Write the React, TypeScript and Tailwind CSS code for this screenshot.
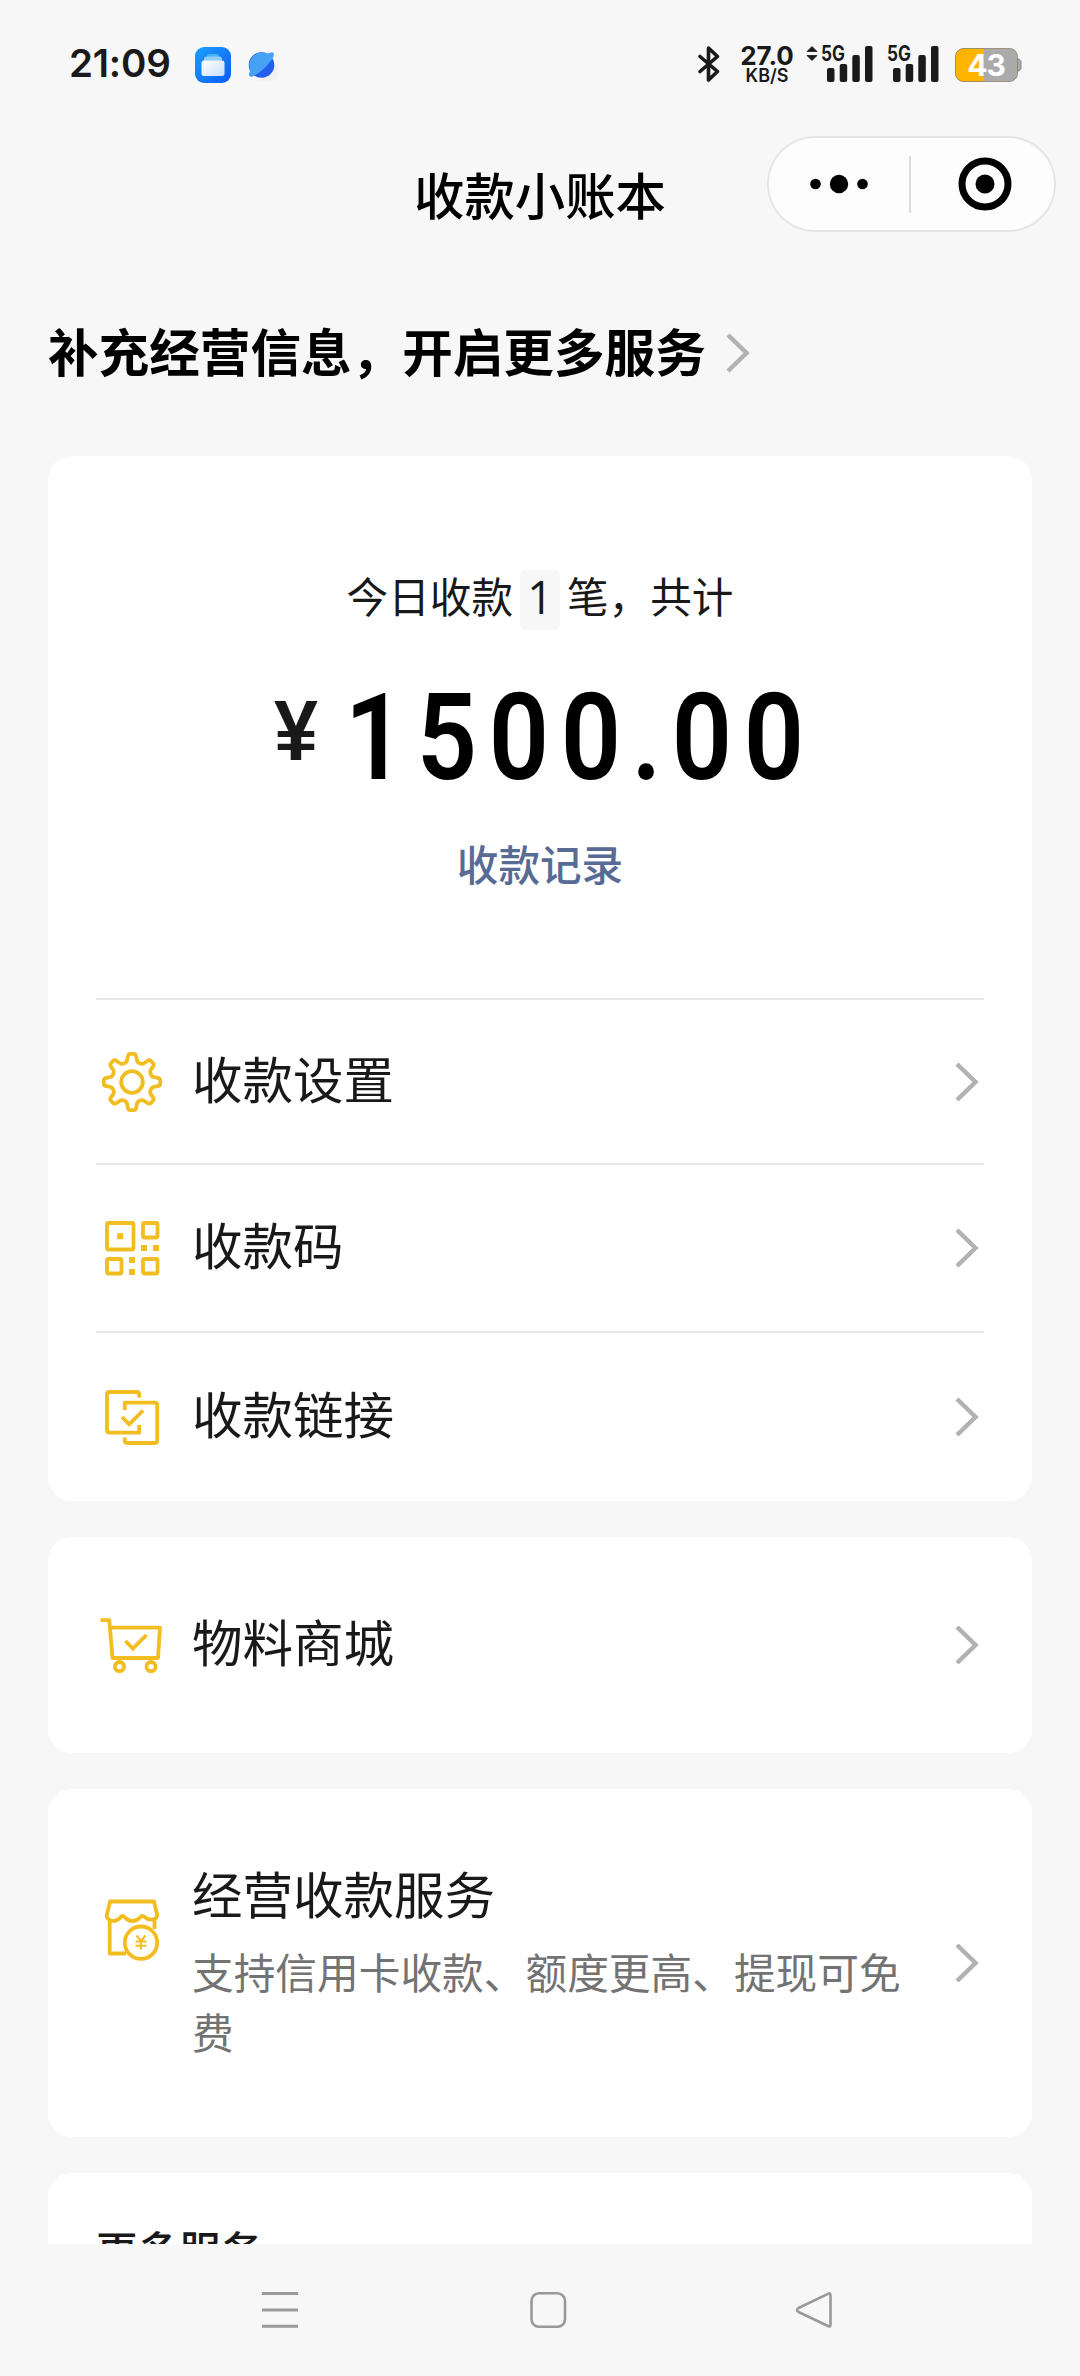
import React from "react";

interface MenuRowProps {
  icon: React.ReactNode;
  title: string;
}

const YELLOW = "#F2BD20";

const digits = ["1", "5", "0", "0", ".", "0", "0"];

const BluetoothIcon = () => (
  <svg width="24" height="38" viewBox="0 0 24 38" fill="none" stroke="#1a1a1a" strokeWidth="3.6" strokeLinejoin="round" strokeLinecap="round">
    <path d="M3 11.5L20.5 26.5L11.5 35V3L20.5 11.5L3 26.5" />
  </svg>
);

const FolderAppIcon = () => (
  <svg width="36" height="36" viewBox="0 0 36 36">
    <defs>
      <linearGradient id="folderBg" x1="0" y1="0" x2="1" y2="1">
        <stop offset="0" stopColor="#1ca0fb" />
        <stop offset="1" stopColor="#0a5cf5" />
      </linearGradient>
      <linearGradient id="folderFront" x1="0" y1="0" x2="1" y2="1">
        <stop offset="0" stopColor="#ffffff" />
        <stop offset="1" stopColor="#c9def9" />
      </linearGradient>
    </defs>
    <rect width="36" height="36" rx="9" fill="url(#folderBg)" />
    <rect x="12" y="7" width="12" height="4" rx="2" fill="#49b2f9" />
    <rect x="9" y="9.5" width="18" height="6" rx="2.5" fill="#8ecdfb" />
    <rect x="6.5" y="13.5" width="23" height="15.5" rx="2.5" fill="url(#folderFront)" />
  </svg>
);

const PlanetIcon = () => (
  <svg width="32" height="32" viewBox="0 0 32 32">
    <path d="M11 31H25Q31 31 31 24V14Z" fill="#f1f1f1" />
    <circle cx="15.5" cy="15" r="12.8" fill="#2160ea" />
    <path d="M27 2.5Q29 4.500 26.500 8.500Q18 21 6.500 26.500Q2.500 27.500 3 24Q3.300 22 4.500 20.500A12.800 12.800 0 0 1 21.500 3.700Q25.500 1.500 27 2.500Z" fill="#47a1f5" />
  </svg>
);

const SignalBars = () => (
  <svg width="46" height="36" viewBox="0 0 46 36" fill="#1a1a1a">
    <rect x="0" y="22" width="7.500" height="14" rx="2" />
    <rect x="12.700" y="18" width="7.500" height="18" rx="2" />
    <rect x="25.300" y="9" width="7.500" height="27" rx="2" />
    <rect x="38" y="0" width="7.500" height="36" rx="2" />
  </svg>
);

const Signal = ({ arrows = false }: { arrows?: boolean }) => (
  <div className="relative h-9 w-[52px]">
    {arrows && (
      <svg className="absolute -left-[15px] top-0" width="12" height="16" viewBox="0 0 12 16" fill="#1a1a1a">
        <path d="M6 0.500L11 5.500H1Z M6 14.500L11 9.500H1Z" stroke="#1a1a1a" strokeWidth="0.800" strokeLinejoin="round" />
      </svg>
    )}
    <span className="absolute -top-px left-0 origin-left scale-x-[.82] font-['Inter'] text-[21px] font-bold leading-[17px]">
      5G
    </span>
    <div className="absolute left-[6px] top-0">
      <SignalBars />
    </div>
  </div>
);

const Battery = () => (
  <div className="relative h-[34px] w-[67px]">
    <svg width="67" height="34" viewBox="0 0 67 34">
      <defs>
        <clipPath id="batteryBody">
          <rect x="0.500" y="0.500" width="62" height="33" rx="8" />
        </clipPath>
      </defs>
      <path d="M62 11H64Q66 12 66 14V20Q66 22 64 23H62Z" fill="#ababab" stroke="#8b8b8b" strokeWidth="1" />
      <g clipPath="url(#batteryBody)">
        <rect width="64" height="34" fill="#ababab" />
        <rect width="29" height="34" fill="#ffb400" />
      </g>
      <rect x="0.500" y="0.500" width="62" height="33" rx="8" fill="none" stroke="#84765a" strokeOpacity="0.700" />
    </svg>
    <span className="absolute inset-y-0 left-0 w-[62px] text-center font-['Inter'] text-[30px] font-bold leading-[35px] tracking-[-1px] text-white">
      43
    </span>
  </div>
);

const StatusBar = () => (
  <header className="flex h-[130px] items-start justify-between pl-[69px] pr-[58px] pt-[46px] text-[#1a1a1a]">
    <div className="flex">
      <span className="w-[126px] whitespace-nowrap font-['Inter'] text-[38.500px] font-semibold leading-[35px] tracking-[-0.200px]">21:09</span>
      <div className="pt-px">
        <FolderAppIcon />
      </div>
      <div className="ml-[15px] pt-1">
        <PlanetIcon />
      </div>
    </div>
    <div className="flex">
      <div className="-mt-px">
        <BluetoothIcon />
      </div>
      <div className="ml-[15px] flex w-[62px] flex-col items-center font-['Inter'] font-bold">
        <span className="text-[26px] leading-[19px]">27.0</span>
        <span className="mt-[3px] text-[18px] font-semibold leading-[16px]">KB/S</span>
      </div>
      <div className="ml-[23px] flex gap-[14px]">
        <Signal arrows />
        <Signal />
      </div>
      <div className="ml-[16px] pt-[2px]">
        <Battery />
      </div>
    </div>
  </header>
);

const NavBar = () => (
  <div className="flex h-[172px] items-start">
    <h1 className="ml-[414px] w-[252px] whitespace-nowrap pt-[28px] text-[50.400px] font-medium leading-[72px] text-black">
      收款小账本
    </h1>
    <div className="flex flex-1 justify-end pr-6 pt-[6px]">
      <div className="flex h-24 w-[289px] items-center rounded-full border-2 border-[#e6e6e6] bg-[#fdfdfd]">
        <div className="flex flex-1 justify-center">
          <svg width="58" height="20" viewBox="0 0 58 20" fill="#000">
            <circle cx="5.500" cy="10" r="5.300" />
            <circle cx="29" cy="10" r="9.200" />
            <circle cx="52.500" cy="10" r="5.300" />
          </svg>
        </div>
        <div className="h-[57px] w-0.5 bg-[#dcdcdc]" />
        <div className="flex w-[143px] justify-center pl-1">
          <svg width="54" height="54" viewBox="0 0 54 54">
            <circle cx="27" cy="27" r="23" fill="none" stroke="#000" strokeWidth="7" />
            <circle cx="27" cy="27" r="9.500" fill="#000" />
          </svg>
        </div>
      </div>
    </div>
  </div>
);

const Chevron = () => (
  <svg className="shrink-0" width="24" height="42" viewBox="0 0 24 42" fill="none" stroke="#b2b2b2" strokeWidth="4.500">
    <path d="M2 3L20.500 21L2 39" />
  </svg>
);

const GearIcon = () => (
  <svg width="72" height="72" viewBox="0 0 72 72" fill="none" stroke={YELLOW} strokeWidth="3.800" strokeLinejoin="round">
    <circle cx="36" cy="36" r="10.800" />
    <path d="M31.800 10.500Q32.300 7.800 34.300 7.800H37.700Q39.700 7.800 40.200 10.500L41 14.500Q41.400 16.200 43 16.900L45 17.700Q46.600 18.300 48 17.300L51.300 15Q53.300 13.600 54.800 15L57 17.200Q58.400 18.700 57 20.700L54.700 24Q53.700 25.400 54.300 27L55.100 29Q55.800 30.600 57.500 31L61.500 31.800Q64.200 32.300 64.200 34.300V37.700Q64.200 39.700 61.500 40.200L57.500 41Q55.800 41.400 55.100 43L54.300 45Q53.700 46.600 54.700 48L57 51.300Q58.400 53.300 57 54.800L54.800 57Q53.300 58.400 51.300 57L48 54.700Q46.600 53.700 45 54.300L43 55.100Q41.400 55.800 41 57.500L40.200 61.500Q39.700 64.200 37.700 64.200H34.300Q32.300 64.200 31.800 61.500L31 57.500Q30.600 55.800 29 55.100L27 54.300Q25.400 53.700 24 54.700L20.700 57Q18.700 58.400 17.200 57L15 54.800Q13.600 53.300 15 51.300L17.300 48Q18.300 46.600 17.700 45L16.900 43Q16.200 41.400 14.500 41L10.500 40.200Q7.800 39.700 7.800 37.700V34.300Q7.800 32.300 10.500 31.800L14.500 31Q16.200 30.600 16.900 29L17.700 27Q18.300 25.400 17.300 24L15 20.700Q13.600 18.700 15 17.200L17.200 15Q18.700 13.600 20.700 15L24 17.300Q25.400 18.300 27 17.700L29 16.900Q30.600 16.200 31 14.500Z" />
  </svg>
);

const QrIcon = () => (
  <svg width="72" height="72" viewBox="0 0 72 72" fill="none" stroke={YELLOW} strokeWidth="3.800">
    <rect x="11" y="11" width="26.500" height="26.500" rx="1.500" />
    <rect x="47" y="11" width="14.500" height="14.500" rx="1.500" />
    <rect x="11" y="47" width="14.500" height="14.500" rx="1.500" />
    <rect x="47" y="47" width="14.500" height="14.500" rx="1.500" />
    <path d="M21.200 21.200h6v6h-6zM45 33h6v6h-6zM57 33h6v6h-6zM33 45h6v6h-6zM33 57h6v6h-6z" fill={YELLOW} stroke="none" />
  </svg>
);

const LinkIcon = () => (
  <svg width="72" height="72" viewBox="0 0 72 72" fill="none" stroke={YELLOW} strokeWidth="3.800" strokeLinejoin="round">
    <path d="M43.200 16.500V13.500Q43.200 11 40.700 11H13.500Q11 11 11 13.500V49.200Q11 51.700 13.500 51.700H43.200V44" />
    <path d="M28.800 29V21.700H58.700Q61.200 21.700 61.200 24.200V59.500Q61.200 62 58.700 62H31.300Q28.800 62 28.800 59.500V56.500" />
    <path d="M26 36L33.200 43.300L47 29.500" strokeLinejoin="miter" />
  </svg>
);

const CartIcon = () => (
  <svg width="72" height="72" viewBox="0 0 72 72" fill="none" stroke={YELLOW} strokeWidth="3.800" strokeLinejoin="round">
    <path d="M4.500 11.200H13.300L16.500 49H62L64 18.600H14" />
    <path d="M29.500 32L36.800 39.500L50.500 26" strokeLinejoin="miter" />
    <circle cx="23.500" cy="57.600" r="4.600" />
    <circle cx="55" cy="57.600" r="4.600" />
  </svg>
);

const ShopIcon = () => (
  <svg width="72" height="72" viewBox="0 0 72 72" fill="none" stroke={YELLOW} strokeWidth="3.800" strokeLinejoin="round">
    <path d="M14 7.500H58L61 20C61.500 24.500 58 26 54 25.500C50 25.300 48.500 22 46.500 22C44 22 43 27 36.500 27C30 27 29 22 26.500 22C24.500 22 23.500 27 18 27C12 27 10 23 11 20Z" />
    <path d="M13.700 26V59.500H30M58.500 26V35" />
    <circle cx="45" cy="48.700" r="16.200" fill="#fff" />
    <path d="M40.500 41.500L45 47L49.500 41.500M45 47V55.500M39.500 47.500H50.500M39.500 51.700H50.500" strokeWidth="2" />
  </svg>
);

const MenuRow = ({ icon, title }: MenuRowProps) => (
  <div className="flex h-full items-center">
    {icon}
    <span className="ml-6 flex-1 pb-[10px] text-[50.500px] leading-[70px] text-[#191919]">{title}</span>
    <div className="mr-[5px]">
      <Chevron />
    </div>
  </div>
);

const SummaryCard = () => (
  <section className="h-[1045px] rounded-3xl bg-white px-12">
    <div className="flex h-[542px] flex-col items-center pt-[114px]">
      <div className="flex h-[60px] items-center text-[41.600px] leading-[60px] text-[#191919]">
        <span className="-mt-[10px]">今日收款</span>
        <span className="mx-[7px] flex h-[60px] w-10 items-center justify-center rounded-md bg-[#f7f7f7] pb-[6px] font-['Open_Sans'] text-[45px]">
          1
        </span>
        <span className="-mt-[10px]">笔，共计</span>
      </div>
      {/* Amount */}
      <div className="mt-[41px] flex h-[134px] w-[540px] items-start">
        <span className="-ml-[3px] w-[66px] scale-x-[.92] pt-[15px] text-center font-['Liberation_Sans'] text-[86px] font-bold leading-[88px] text-[#191919]">
          ¥
        </span>
        <div className="ml-[14px] flex font-['Roboto'] text-[120px] font-semibold leading-[134px] text-black">
          {digits.map((digit, index) => (
            <span key={index} className={`flex scale-x-[.88] justify-center ${digit === "." ? "w-[39px]" : "w-[72px]"}`}>
              {digit}
            </span>
          ))}
        </div>
      </div>
      <a className="mt-[28px] text-[41.600px] font-medium leading-[60px] text-[#576b95]">收款记录</a>
    </div>
    <div className="h-[165px] border-t-2 border-[#e8e8e8]">
      <MenuRow icon={<GearIcon />} title="收款设置" />
    </div>
    <div className="h-[168px] border-t-2 border-[#e8e8e8]">
      <MenuRow icon={<QrIcon />} title="收款码" />
    </div>
    <div className="h-[170px] border-t-2 border-[#e8e8e8]">
      <MenuRow icon={<LinkIcon />} title="收款链接" />
    </div>
  </section>
);

const SystemNav = () => (
  <nav className="flex h-[132px] items-start pl-[261px] pt-[46px]">
    <svg width="38" height="40" viewBox="0 0 38 40" stroke="#999" strokeWidth="3">
      <path d="M1 3.500H37M1 20H37M1 36.300H37" />
    </svg>
    <svg className="ml-[229px]" width="40" height="40" viewBox="0 0 40 40" fill="none" stroke="#999" strokeWidth="2.600">
      <rect x="3.500" y="3.300" width="33.500" height="33.500" rx="7.500" />
    </svg>
    <svg className="ml-[226px]" width="40" height="40" viewBox="0 0 40 40" fill="none" stroke="#999" strokeWidth="2.600" strokeLinejoin="round">
      <path d="M34 3.800Q36.500 2.500 36.500 5.500V34.500Q36.500 37.500 34 36L4.500 22Q1.500 20 4.500 18Z" />
    </svg>
  </nav>
);

const App = () => {
  return (
    <div className="flex h-[2376px] w-[1080px] flex-col overflow-hidden bg-[#f7f7f7] font-['Noto_Sans_CJK_SC',sans-serif]">
      <StatusBar />
      <NavBar />
      <div className="flex h-[154px] shrink-0 items-start pl-12">
        <h2 className="pt-[12px] text-[50.600px] font-bold leading-[72px] text-black">补充经营信息，开启更多服务</h2>
        <div className="ml-5 pt-[30px]">
          <Chevron />
        </div>
      </div>

      <main className="flex h-[1788px] shrink-0 flex-col gap-9 overflow-hidden px-12">
        <SummaryCard />
        <section className="h-[216px] shrink-0 rounded-3xl bg-white px-12">
          <MenuRow icon={<CartIcon />} title="物料商城" />
        </section>
        <section className="flex h-[348px] shrink-0 rounded-3xl bg-white px-12">
          <div className="pt-[105px]">
            <ShopIcon />
          </div>
          <div className="ml-6 w-[715px] pt-[68px]">
            <h3 className="text-[50.500px] leading-[70px] text-[#191919]">经营收款服务</h3>
            <p className="mt-[14px] text-[41.700px] leading-[60px] text-[#737373]">
              支持信用卡收款、额度更高、提现可免费
            </p>
          </div>
          <div className="ml-auto mr-[5px] flex items-center">
            <Chevron />
          </div>
        </section>
        <section className="h-[300px] shrink-0 rounded-3xl bg-white px-12 pt-[46px]">
          <h3 className="text-[41.600px] font-medium leading-[60px] text-[#191919]">更多服务</h3>
        </section>
      </main>

      <SystemNav />
    </div>
  );
};

export default App;
